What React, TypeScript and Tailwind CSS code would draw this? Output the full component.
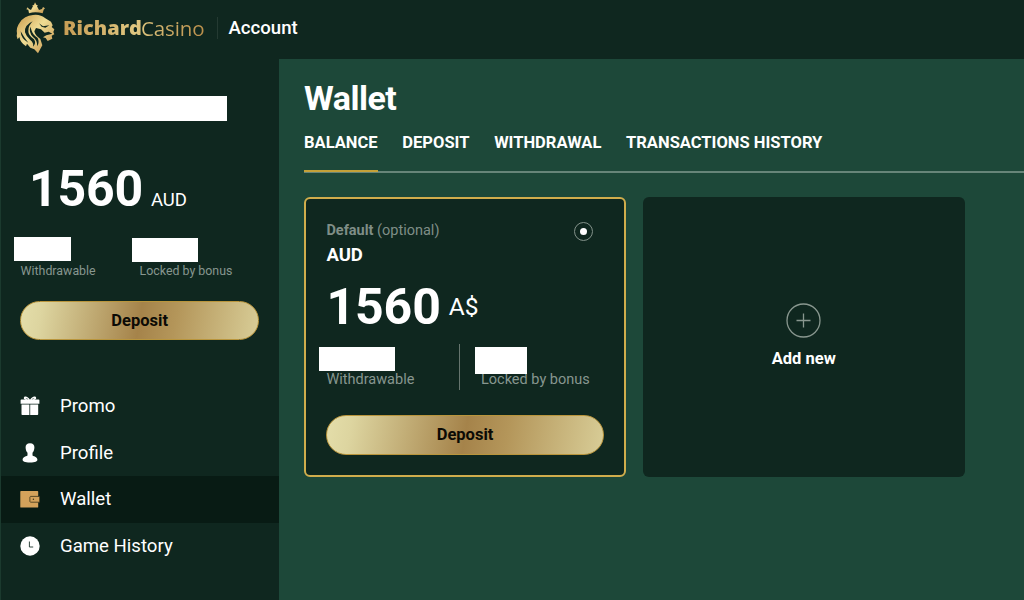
import type { ReactNode } from 'react'
import clsx from 'clsx'

const TABS = ['BALANCE', 'DEPOSIT', 'WITHDRAWAL', 'TRANSACTIONS HISTORY']

function LionLogo() {
  return (
    <svg width="42" height="54" viewBox="0 0 126 162" className="shrink-0" aria-hidden="true">
      <defs>
        <linearGradient id="lion" x1="0" y1="0" x2="1" y2="1">
          <stop offset="0" stopColor="#c99a4b" />
          <stop offset="0.45" stopColor="#efdc94" />
          <stop offset="1" stopColor="#c08d45" />
        </linearGradient>
      </defs>
      <g fill="url(#lion)">
        <path d="M34 28 L38 22 L42 27 L48 30 L54 18 L51 17 L57 14 L60 7 L64 14 L69 17 L66 19 L72 30 L81 27 L84 21 L90 25 L86 29 L83 40 Q60 34 42 40 L40 29 Z" />
        <path d="M6 100 Q3 82 14 68 Q28 47 54 45 Q76 42 91 55 L108 65 L113 76 L110 81 L118 88 L115 96 L118 103 L110 107 L112 116 L98 123 L92 114 L84 112 L94 106 L112 101 L101 95 L89 98 L78 88 L63 84 L58 94 Q60 106 76 117 L82 136 L69 160 L58 148 L46 143 L36 131 L33 139 Q16 128 13 111 L8 118 Q3 108 6 100 Z" />
      </g>
      <g fill="#0f271f">
        <path d="M53 64 Q27 76 30 97 Q34 110 46 120 Q57 129 54 140 Q65 130 57 118 Q39 105 40 92 Q40 77 53 64 Z" />
        <path d="M17 94 Q18 117 40 128 Q27 113 17 94 Z" />
        <path d="M46 80 Q41 98 54 111 Q67 120 67 139 Q74 126 68 114 Q53 103 50 92 Z" />
        <path d="M72 70 L84 79 L103 76 L91 83 L80 80 Z" />
      </g>
    </svg>
  )
}

function GiftIcon() {
  return (
    <svg width="20" height="20" viewBox="0 0 20 20" fill="#fff">
      <path d="M1.5 8.4h7.9V19H2.3a.8.8 0 0 1-.8-.8zM10.2 8.4h8v9.8a.8.8 0 0 1-.8.8h-7.2z" />
      <path d="M1.4 3.5h17.2a.8.8 0 0 1 .8.8v3.4H.6V4.3a.8.8 0 0 1 .8-.8z" />
      <path d="M10 4.2C8.4.5 4.3-.5 3.8 2c-.3 1.4 1.5 2.2 6.2 2.2zm0 0c1.6-3.7 5.7-4.7 6.2-2.2.3 1.4-1.5 2.2-6.2 2.2z" />
      <path d="M5.5 2.7q1.8-.9 3 .9zM14.5 2.7q-1.8-.9-3 .9z" fill="#0f271f" />
    </svg>
  )
}

function ProfileIcon() {
  return (
    <svg width="20" height="20" viewBox="0 0 20 20" fill="#fff">
      <path d="M10 .3C6.9.3 5.5 2 5.6 4.6c.1 2.2.7 3.9 1.9 5.2v2.6c-2 1.1-4.7 1.6-4.9 4.1-.1 2 2 3 7.4 3s7.5-1 7.4-3c-.2-2.500-2.900-3-4.900-4.100V9.800c1.200-1.300 1.800-3 1.900-5.200C14.500 2 13.100.3 10 .3z" />
    </svg>
  )
}

function WalletIcon() {
  return (
    <svg width="20" height="20" viewBox="0 0 20 20" fill="#d3a25b">
      <path d="M1 2h16.5a.7.7 0 0 1 .7.7v15.2a.7.7 0 0 1-.7.7H1a.7.7 0 0 1-.7-.7V2.7A.7.7 0 0 1 1 2z" />
      <path d="M10.6 7.4h9.1v5.8h-9.1a1 1 0 0 1-.7-.7V8.1a1 1 0 0 1 .7-.7z" stroke="#3b3319" strokeWidth=".8" />
      <circle cx="13.4" cy="10.3" r=".7" fill="#3b3319" />
    </svg>
  )
}

function ClockIcon() {
  return (
    <svg width="20" height="20" viewBox="0 0 20 20">
      <circle cx="10" cy="10" r="9.7" fill="#fff" />
      <path d="M9.4 5.5V11h3.8" fill="none" stroke="#31463e" strokeWidth="1" />
    </svg>
  )
}

const MENU: { label: string; icon: ReactNode; active?: boolean }[] = [
  { label: 'Promo', icon: <GiftIcon /> },
  { label: 'Profile', icon: <ProfileIcon /> },
  { label: 'Wallet', icon: <WalletIcon />, active: true },
  { label: 'Game History', icon: <ClockIcon /> },
]

function DepositButton() {
  return (
    <button className="flex h-[39.5px] w-full items-center justify-center rounded-full border border-[#b9953c] bg-[linear-gradient(100deg,#e4deaa_0%,#ddd5a0_9%,#a5834a_50%,#b4965a_65%,#d8cd97_100%)] pt-0.5 text-[16.5px] font-bold text-[#0b0a05]">
      Deposit
    </button>
  )
}

export default function App() {
  return (
    <div className="flex h-[600px] w-[1024px] flex-col overflow-hidden border-l border-[#1b3a2e] bg-[#0f271f] font-['Roboto',sans-serif] text-white">
      <header className="flex h-[59px] shrink-0 items-start pl-[14px]">
        <LionLogo />
        <div className="ml-[6px] mt-[13px] flex h-[30px] w-[145px] items-center bg-gradient-to-r from-[#c79d55] via-[#dfc780] to-[#b88c48] bg-clip-text font-['Open_Sans',sans-serif] text-[20px] leading-[30px] text-transparent">
          <span className="w-[78px] font-extrabold">Richard</span>
          <span className="text-[20.5px] tracking-[-.1px]">Casino</span>
        </div>
        <div className="ml-[9px] mt-[17px] h-[22px] w-px bg-[#243a32]" />
        <span className="ml-[10.5px] mt-4 text-[18.6px] leading-6 font-medium">Account</span>
      </header>

      <div className="flex min-h-0 flex-1">
        <aside className="w-[278px] shrink-0">
          <div className="ml-[16.4px] mt-[36.5px] h-[25px] w-[210px] bg-white" />

          <div className="mt-[43.5px] flex items-baseline pl-[28px] leading-[50px]">
            <span className="text-[50px] font-bold tracking-[-.2px]">1560</span>
            <span className="ml-[8px] text-[18.5px]">AUD</span>
          </div>

          <div className="mt-[12px] flex pl-[19.5px] text-[12.4px] leading-4 text-[#87968f]">
            <div className="w-[119px]">
              <div className="-ml-[6.1px] h-6 w-[57px] bg-white" />
              <div className="mt-[2px]">Withdrawable</div>
            </div>
            <div>
              <div className="-ml-[7.5px] mt-px h-6 w-[66px] bg-white" />
              <div className="mt-px">Locked by bonus</div>
            </div>
          </div>

          <div className="mt-[21.5px] pl-[19.4px] pr-5">
            <DepositButton />
          </div>

          <nav className="mt-[43px]">
            {MENU.map((item) => (
              <a
                key={item.label}
                className={clsx('flex h-[46.5px] items-center gap-[20px] pl-[19px] text-[18.6px]', item.active && 'bg-[#081b14]')}
              >
                {item.icon}
                <span className="pt-0.5">{item.label}</span>
              </a>
            ))}
          </nav>
        </aside>

        <main className="min-w-0 flex-1 bg-[#1d4839] pl-[25px] pt-[19px]">
          <h1 className="text-[34px] leading-10 font-bold tracking-[-.5px]">Wallet</h1>

          <div className="mt-[13px] flex h-[42px] gap-[24.7px] border-b-2 border-[#678579] text-[16.55px] leading-6 font-bold whitespace-nowrap">
            {TABS.map((tab, i) => (
              <div key={tab} className={clsx(i === 0 && '-mt-px h-[42px] border-b-2 border-[#c4a138] pt-px')}>
                {tab}
              </div>
            ))}
          </div>

          <div className="mt-[24px] flex gap-[16.5px]">
            <section className="h-[280px] w-[322px] rounded-md border-2 border-[#d0ad4c] bg-[#0f271f] px-[20.4px] pt-5">
              <div className="flex justify-between">
                <div>
                  <div className="text-[14.5px] leading-[23px] text-[#7f8e87]">
                    <span className="font-bold">Default</span> (optional)
                  </div>
                  <div className="text-[18.5px] leading-[26px] font-bold">AUD</div>
                </div>
                <div className="mr-[10.4px] mt-[3px] flex size-[19px] items-center justify-center rounded-full border border-[#829189]">
                  <div className="size-[7px] rounded-full bg-white" />
                </div>
              </div>

              <div className="mt-[14px] flex items-center leading-[50px]">
                <span className="text-[50px] font-bold tracking-[-.1px]">1560</span>
                <span className="ml-[8px] text-[24.5px]">A$</span>
              </div>

              <div className="mt-3 flex h-[46px] text-[14.5px] leading-4 text-[#87968f]">
                <div className="w-[133.6px] border-r border-[#66756e]">
                  <div className="-ml-[7.2px] mt-[2.5px] h-[24.5px] w-[76px] bg-white" />
                  <div className="mt-px">Withdrawable</div>
                </div>
                <div className="pl-[21px]">
                  <div className="relative z-10 -ml-[6px] mt-[3px] h-[27px] w-[52px] bg-white" />
                  <div className="-mt-[2px]">Locked by bonus</div>
                </div>
              </div>

              <div className="mt-[25px]">
                <DepositButton />
              </div>
            </section>

            <section className="flex h-[280px] w-[322.5px] flex-col items-center rounded-md bg-[#0f271f] pt-[106px]">
              <svg width="35" height="35" viewBox="0 0 35 35" fill="none" stroke="#89978f" strokeWidth="1.3">
                <circle cx="17.5" cy="17.5" r="16.5" />
                <path d="M17.5 10.5v14M10.5 17.5h14" />
              </svg>
              <span className="mt-[9px] text-[16.5px] leading-6 font-bold">Add new</span>
            </section>
          </div>
        </main>
      </div>
    </div>
  )
}
